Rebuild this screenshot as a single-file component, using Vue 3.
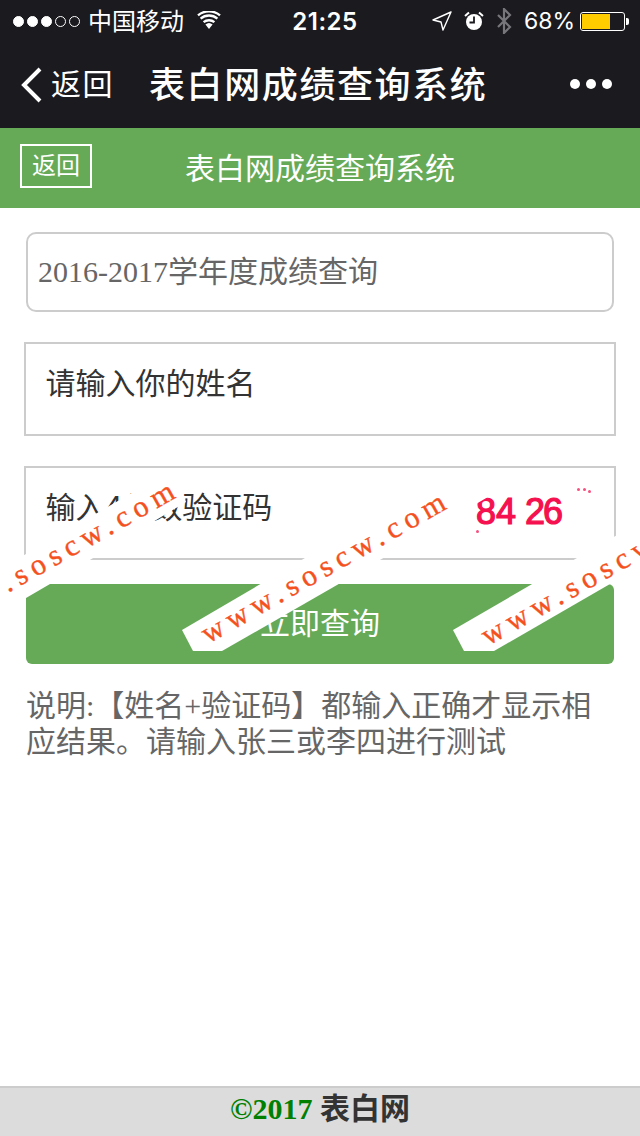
<script setup>
const title = '表白网成绩查询系统'
const dots = [true, true, true, false, false]
const bands = [
  { id: 1, points: '0,569 130,494 146,484 178,484 186,502 50,584 26,598 0,613', x: -63, y: 633 },
  { id: 2, points: '182,630 305,558 455,472 500,490 337,585 222,651 193,651', x: 208, y: 644 },
  { id: 3, points: '453,630 577,558 640,522 640,566 610,584 494,651 464,651', x: 488, y: 646 }
]
</script>

<template>
  <div class="page">
    <header class="chrome">
      <div class="status">
        <div class="status-left">
          <span v-for="(on, i) in dots" :key="i" class="signal" :class="{ on }"></span>
          <span class="carrier">中国移动</span>
          <svg class="wifi" viewBox="0 0 24 18" width="24" height="18">
            <path d="M12 18l-3.6-4.4a5.6 5.6 0 0 1 7.2 0z" fill="#fff" />
            <path d="M6.6 11.2a8.4 8.4 0 0 1 10.8 0M3.6 7.6a13 13 0 0 1 16.8 0M1 4.4a17 17 0 0 1 22 0" fill="none" stroke="#fff" stroke-width="2.4" />
          </svg>
        </div>
        <span class="time">21:25</span>
        <div class="status-right">
          <svg class="loc" viewBox="0 0 20 20" width="20" height="20">
            <path d="M19 1L1 9l8 2 2 8z" fill="none" stroke="#fff" stroke-width="1.4" stroke-linejoin="round" />
          </svg>
          <svg class="alarm" viewBox="0 0 20 20" width="20" height="20">
            <circle cx="10" cy="11" r="8" fill="#fff" />
            <path d="M10 5.5V11.5H5.5" fill="none" stroke="#1a1a1f" stroke-width="1.8" />
            <path d="M1 5l4-3.5M19 5l-4-3.5" stroke="#fff" stroke-width="2" />
          </svg>
          <svg class="bt" viewBox="0 0 16 26" width="16" height="26">
            <path d="M2 7l12 12-6 6V1l6 6L2 19" fill="none" stroke="#77777b" stroke-width="2.2" />
          </svg>
          <span class="percent">68%</span>
          <div class="battery"><div class="level" :style="{ width: '68%' }"></div></div>
          <span class="cap"></span>
        </div>
      </div>
      <div class="nav">
        <svg class="chev" viewBox="0 0 22 36" width="22" height="36">
          <path d="M19 2L3 18l16 16" fill="none" stroke="#fff" stroke-width="4" />
        </svg>
        <span class="nav-back">返回</span>
        <span class="nav-title">{{ title }}</span>
        <div class="more"><i></i><i></i><i></i></div>
      </div>
    </header>

    <div class="bar">
      <a class="bar-back">返回</a>
      <span class="bar-title">{{ title }}</span>
    </div>

    <main class="main">
      <input class="year" placeholder="2016-2017学年度成绩查询" />
      <input class="field first" placeholder="请输入你的姓名" />
      <div class="captcha-field">
        <input class="field" placeholder="输入4位数验证码" />
        <div class="captcha">
          <span>8</span><span>4</span><span class="gap">2</span><span>6</span>
          <i class="spk s1"></i><i class="spk s2"></i><i class="spk s3"></i><i class="spk s4"></i>
        </div>
      </div>
      <button class="submit">立即查询</button>
      <p class="note">说明:【姓名+验证码】都输入正确才显示相应结果。请输入张三或李四进行测试</p>
    </main>

    <footer class="foot"><b class="copy">©2017</b> <b>表白网</b></footer>

    <svg class="marks" viewBox="0 0 640 1136" width="640" height="1136">
      <g v-for="b in bands" :key="b.id">
        <polygon :points="b.points" fill="#fff" />
        <text class="mark" :x="b.x" :y="b.y" :transform="`rotate(-29.5 ${b.x} ${b.y})`">www.soscw.com</text>
      </g>
    </svg>
  </div>
</template>

<style scoped>
.page {
  position: relative;
  width: 640px;
  height: 1136px;
  display: flex;
  flex-direction: column;
  overflow: hidden;
  background: #fff;
  font-family: "Noto Sans CJK SC", "Noto Sans", sans-serif;
}
.chrome {
  background: #1a1a1f;
  color: #fff;
  height: 128px;
  flex: none;
}
.status {
  height: 42px;
  display: flex;
  align-items: center;
  padding: 0 11px 0 13px;
}
.status-left,
.status-right {
  flex: 1;
  display: flex;
  align-items: center;
}
.status-right {
  justify-content: flex-end;
}
.signal {
  width: 11px;
  height: 11px;
  box-sizing: border-box;
  border: 1.5px solid #fff;
  border-radius: 50%;
  margin-right: 3px;
}
.signal.on {
  background: #fff;
}
.carrier {
  font-size: 24px;
  line-height: 42px;
  margin-left: 5px;
  margin-top: -2px;
}
.wifi {
  margin-left: 13px;
  margin-top: -3px;
}
.time {
  font-family: "Inter", "Noto Sans", sans-serif;
  font-size: 24px;
  font-weight: 600;
  letter-spacing: 0.5px;
  margin-left: 8px;
}
.loc,
.alarm,
.bt {
  margin-right: 12px;
}
.percent {
  font-family: "Inter", "Noto Sans", sans-serif;
  font-size: 23px;
  margin-right: 5px;
}
.battery {
  width: 45px;
  height: 19px;
  box-sizing: border-box;
  border: 1px solid #fff;
  border-radius: 3px;
  padding: 1px;
}
.level {
  height: 100%;
  background: #fc0;
}
.cap {
  width: 3px;
  height: 7px;
  background: #fff;
  border-radius: 0 2px 2px 0;
  margin-left: 1px;
}
.nav {
  height: 86px;
  display: flex;
  align-items: center;
  padding: 0 28px 6px 21px;
  box-sizing: border-box;
}
.chev {
  flex: none;
  margin-top: 5px;
}
.nav-back {
  font-size: 30px;
  letter-spacing: 1.5px;
  margin-left: 8px;
}
.nav-title {
  font-size: 36px;
  font-weight: 500;
  letter-spacing: 1.6px;
  margin-left: 35px;
  white-space: nowrap;
}
.more {
  margin-left: auto;
  margin-top: 4px;
  display: flex;
  gap: 6px;
}
.more i {
  width: 10px;
  height: 10px;
  border-radius: 50%;
  background: #fff;
}
.bar {
  position: relative;
  flex: none;
  height: 80px;
  box-sizing: border-box;
  padding-bottom: 5px;
  background: #66aa58;
  display: flex;
  align-items: center;
  justify-content: center;
  color: #fff;
}
.bar-back {
  position: absolute;
  left: 20px;
  top: 16px;
  width: 72px;
  height: 44px;
  box-sizing: border-box;
  border: 2px solid #fff;
  font-size: 24px;
  line-height: 36px;
  text-align: center;
}
.bar-title {
  font-size: 30px;
}
.main {
  flex: 1;
  display: flex;
  flex-direction: column;
}
input {
  display: block;
  box-sizing: border-box;
  outline: none;
  background: #fff;
  font-size: 30px;
  font-family: "Liberation Serif", "Noto Sans CJK SC", serif;
}
.year {
  margin: 24px 26px 0;
  width: 588px;
  height: 80px;
  border: 2px solid #ccc;
  border-radius: 10px;
  padding: 0 10px;
}
.year::placeholder {
  color: #666;
  opacity: 1;
}
.field {
  width: 592px;
  height: 94px;
  border: 2px solid #ccc;
  padding: 0 20px 16px 19.5px;
  margin: 0 24px;
  font-family: "Noto Sans CJK SC", sans-serif;
}
.field::placeholder {
  color: #333;
  opacity: 1;
}
.first {
  margin-top: 30px;
}
.captcha-field {
  position: relative;
  margin-top: 30px;
}
.captcha {
  position: absolute;
  left: 476px;
  top: 26px;
  display: flex;
  color: #f5104f;
  font-family: "Liberation Sans", sans-serif;
  font-weight: 400;
  -webkit-text-stroke: 1.2px #f5104f;
  font-size: 36px;
  line-height: 40px;
}
.captcha span {
  width: 20px;
}
.captcha .gap {
  margin-left: 9px;
  width: 18px;
}
.spk {
  position: absolute;
  width: 3px;
  height: 3px;
  border-radius: 50%;
  background: #f5507f;
}
.s1 { left: 101px; top: -4px; }
.s2 { left: 107px; top: -4px; }
.s3 { left: 112px; top: -2px; }
.s4 { left: 0; top: 38px; }
.submit {
  display: block;
  margin: 24px 26px 0;
  width: 588px;
  height: 80px;
  border: 0;
  border-radius: 6px;
  padding: 0 0 6px;
  background: #66aa58;
  color: #fff;
  font-size: 30px;
  font-family: "Noto Sans CJK SC", sans-serif;
}
.note {
  margin: 24px 26px 0;
  color: #666;
  font-size: 30px;
  line-height: 36px;
  font-family: "Liberation Serif", "Noto Sans CJK SC", serif;
}
.foot {
  flex: none;
  height: 50px;
  box-sizing: border-box;
  border-top: 2px solid #ccc;
  background: #dcdcdc;
  color: #333;
  font-size: 30px;
  line-height: 42px;
  text-align: center;
  font-family: "Liberation Serif", "Noto Sans CJK SC", serif;
}
.copy {
  color: #008000;
}
.marks {
  position: absolute;
  left: 0;
  top: 0;
  pointer-events: none;
}
.mark {
  font-family: "Liberation Serif", serif;
  font-size: 30px;
  letter-spacing: 6.2px;
  fill: #f4511e;
  stroke: #f4511e;
  stroke-width: 0.4px;
}
</style>
